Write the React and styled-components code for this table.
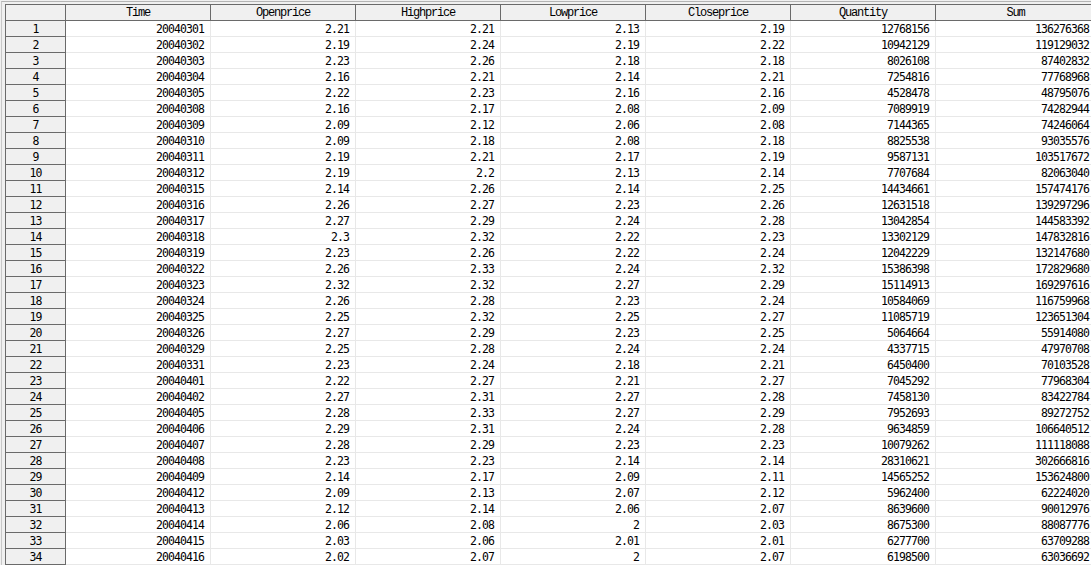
import React from 'react';
import styled, { createGlobalStyle } from 'styled-components';

const rows = [
  ['20040301', '2.21', '2.21', '2.13', '2.19', '12768156', '136276368'],
  ['20040302', '2.19', '2.24', '2.19', '2.22', '10942129', '119129032'],
  ['20040303', '2.23', '2.26', '2.18', '2.18', '8026108', '87402832'],
  ['20040304', '2.16', '2.21', '2.14', '2.21', '7254816', '77768968'],
  ['20040305', '2.22', '2.23', '2.16', '2.16', '4528478', '48795076'],
  ['20040308', '2.16', '2.17', '2.08', '2.09', '7089919', '74282944'],
  ['20040309', '2.09', '2.12', '2.06', '2.08', '7144365', '74246064'],
  ['20040310', '2.09', '2.18', '2.08', '2.18', '8825538', '93035576'],
  ['20040311', '2.19', '2.21', '2.17', '2.19', '9587131', '103517672'],
  ['20040312', '2.19', '2.2', '2.13', '2.14', '7707684', '82063040'],
  ['20040315', '2.14', '2.26', '2.14', '2.25', '14434661', '157474176'],
  ['20040316', '2.26', '2.27', '2.23', '2.26', '12631518', '139297296'],
  ['20040317', '2.27', '2.29', '2.24', '2.28', '13042854', '144583392'],
  ['20040318', '2.3', '2.32', '2.22', '2.23', '13302129', '147832816'],
  ['20040319', '2.23', '2.26', '2.22', '2.24', '12042229', '132147680'],
  ['20040322', '2.26', '2.33', '2.24', '2.32', '15386398', '172829680'],
  ['20040323', '2.32', '2.32', '2.27', '2.29', '15114913', '169297616'],
  ['20040324', '2.26', '2.28', '2.23', '2.24', '10584069', '116759968'],
  ['20040325', '2.25', '2.32', '2.25', '2.27', '11085719', '123651304'],
  ['20040326', '2.27', '2.29', '2.23', '2.25', '5064664', '55914080'],
  ['20040329', '2.25', '2.28', '2.24', '2.24', '4337715', '47970708'],
  ['20040331', '2.23', '2.24', '2.18', '2.21', '6450400', '70103528'],
  ['20040401', '2.22', '2.27', '2.21', '2.27', '7045292', '77968304'],
  ['20040402', '2.27', '2.31', '2.27', '2.28', '7458130', '83422784'],
  ['20040405', '2.28', '2.33', '2.27', '2.29', '7952693', '89272752'],
  ['20040406', '2.29', '2.31', '2.24', '2.28', '9634859', '106640512'],
  ['20040407', '2.28', '2.29', '2.23', '2.23', '10079262', '111118088'],
  ['20040408', '2.23', '2.23', '2.14', '2.14', '28310621', '302666816'],
  ['20040409', '2.14', '2.17', '2.09', '2.11', '14565252', '153624800'],
  ['20040412', '2.09', '2.13', '2.07', '2.12', '5962400', '62224020'],
  ['20040413', '2.12', '2.14', '2.06', '2.07', '8639600', '90012976'],
  ['20040414', '2.06', '2.08', '2', '2.03', '8675300', '88087776'],
  ['20040415', '2.03', '2.06', '2.01', '2.01', '6277700', '63709288'],
  ['20040416', '2.02', '2.07', '2', '2.07', '6198500', '63036692'],
];

const columns = ['Time', 'Openprice', 'Highprice', 'Lowprice', 'Closeprice', 'Quantity', 'Sum'];

const App = () => {
  return (
    <>
      <GlobalStyle />
      <Frame>
        <Pane>
          <Grid>
            <Corner />
            {columns.map((c) => (
              <HeadCell key={c}>{c}</HeadCell>
            ))}
            {rows.map((r, i) => (
              <React.Fragment key={i}>
                <RowHead>{i + 1}</RowHead>
                {r.map((v, j) => (
                  <Cell key={j}>{v}</Cell>
                ))}
              </React.Fragment>
            ))}
          </Grid>
        </Pane>
      </Frame>
    </>
  );
};

// Styled Components
const GlobalStyle = createGlobalStyle`
  html, body {
    margin: 0;
    padding: 0;
    background: #ffffff;
    overflow: hidden;
  }
`;

const Frame = styled.div`
  width: 1091px;
  height: 565px;
  overflow: hidden;
  padding: 1px 0 0 1px;
  box-sizing: border-box;
  background: #f0f0f0;
`;

const Pane = styled.div`
  height: 100%;
  border-top: 1px solid #b4b4b4;
  border-left: 1px solid #c8c8c8;
  padding: 2px 0 0 3px;
  box-sizing: border-box;
  background: #f0f0f0;
`;

const Grid = styled.div`
  display: grid;
  grid-template-columns: 60px repeat(6, 145px) 160px;
  grid-auto-rows: 16px;
  width: max-content;
  border-top: 1px solid #6a6a6a;
  border-left: 1px solid #6a6a6a;
  background: #ffffff;
`;

const Base = styled.div`
  box-sizing: border-box;
  height: 16px;
  line-height: 15px;
  white-space: nowrap;
  overflow: hidden;
  color: #000000;
`;

const Corner = styled(Base)`
  background: #f0f0f0;
  border-right: 1px solid #6a6a6a;
  border-bottom: 1px solid #6a6a6a;
`;

const HeadCell = styled(Base)`
  background: #f0f0f0;
  border-right: 1px solid #6a6a6a;
  border-bottom: 1px solid #6a6a6a;
  text-align: center;
  padding-top: 1px;
  font-family: 'Liberation Mono', monospace;
  font-size: 12px;
  letter-spacing: -1.2px;
`;

const Numeric = styled(Base)`
  font-family: 'DejaVu Sans Mono', 'Liberation Mono', monospace;
  font-size: 11.5px;
  letter-spacing: -0.93px;
  padding-top: 1px;
`;

const RowHead = styled(Numeric)`
  background: #f0f0f0;
  border-right: 1px solid #6a6a6a;
  border-bottom: 1px solid #6a6a6a;
  text-align: center;
`;

const Cell = styled(Numeric)`
  background: #ffffff;
  border-right: 1px solid #e8e8e8;
  border-bottom: 1px solid #e8e8e8;
  text-align: right;
  padding-right: 6px;
`;

export default App;
